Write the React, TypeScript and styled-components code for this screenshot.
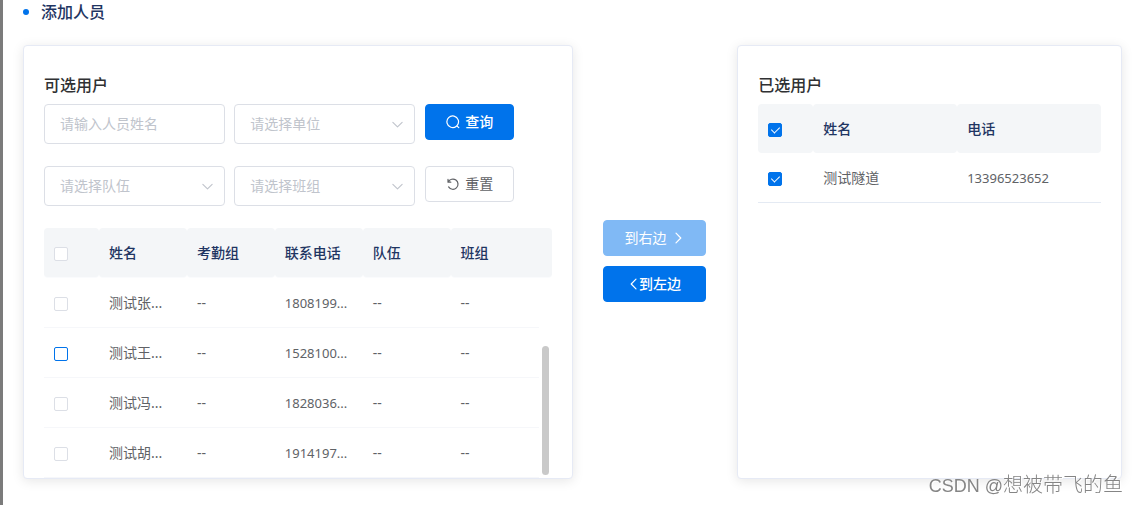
import React from "react";
import styled, { createGlobalStyle } from "styled-components";

const GlobalStyle = createGlobalStyle`
  * { box-sizing: border-box; }
  body {
    margin: 0;
    background: #fff;
    color: #606266;
    font: 14px/20px "Noto Sans", "Noto Sans CJK SC", sans-serif;
  }
  button, input, select { font: inherit; margin: 0; }
`;

const Page = styled.main`
  min-height: 100vh;
  border-left: 3px solid #7b7b7b;
  padding: 0 17px 27px 20px;
`;

const Title = styled.h1`
  display: flex;
  align-items: center;
  gap: 12px;
  margin: 0 0 21px;
  color: #1f3562;
  font-size: 16px;
  font-weight: 500;
  line-height: 24px;

  &::before {
    content: "";
    width: 6px;
    height: 6px;
    border-radius: 50%;
    background: #0073eb;
  }
`;

const Transfer = styled.div`
  display: grid;
  grid-template-columns: 50fr 15fr 35fr;
`;

const Card = styled.section`
  min-width: 0;
  padding: 20px 20px 0;
  border: 1px solid #e6eaf5;
  border-radius: 4px;
  background: #fff;
  box-shadow: 0 2px 12px rgba(0, 0, 0, 0.1);
`;

const CardTitle = styled.h2`
  margin: 0;
  color: #303133;
  font-size: 16px;
  font-weight: 500;
  line-height: 38px;
`;

const Filters = styled.form`
  display: grid;
  grid-template-columns: 181fr 181fr 127fr;
  column-gap: 9px;
  row-gap: 22px;
  margin-bottom: 22px;
`;

const Field = styled.label`
  position: relative;
  display: block;

  svg {
    position: absolute;
    top: 14px;
    right: 11px;
    color: #c0c4cc;
    pointer-events: none;
  }
`;

const controlStyle = `
  display: block;
  width: 100%;
  height: 40px;
  padding: 0 15px;
  border: 1px solid #dcdfe6;
  border-radius: 4px;
  background: #fff;
  color: #c0c4cc;
  appearance: none;
  outline: none;
`;

const TextInput = styled.input`
  ${controlStyle}
  padding-bottom: 2px;
  &::placeholder { color: #c0c4cc; opacity: 1; }
`;

const Select = styled.select`
  ${controlStyle}
`;

const Button = styled.button<{ $primary?: boolean; $gap?: number; $width: number }>`
  display: flex;
  align-items: center;
  justify-content: center;
  gap: ${(p) => p.$gap ?? 5}px;
  width: ${(p) => p.$width}px;
  height: 36px;
  padding: 0;
  border: 1px solid ${(p) => (p.$primary ? "#0073eb" : "#dcdfe6")};
  border-radius: 4px;
  background: ${(p) => (p.$primary ? "#0073eb" : "#fff")};
  color: ${(p) => (p.$primary ? "#fff" : "#606266")};
  font-weight: ${(p) => (p.$primary ? 500 : 400)};
  cursor: pointer;

  &:disabled {
    border-color: #80b9f5;
    background: #80b9f5;
    font-weight: 400;
    cursor: not-allowed;
  }
`;

const FilterAction = styled.div`
  padding-left: 1px;
`;

const Actions = styled.div`
  display: flex;
  flex-direction: column;
  align-items: center;
  justify-content: center;
  gap: 10px;
  padding-bottom: 2px;
`;

const TableBox = styled.div`
  position: relative;
`;

const Table = styled.table`
  width: 100%;
  table-layout: fixed;
  border-collapse: separate;
  border-spacing: 0;
`;

const HeadCell = styled.th<{ $compact?: boolean }>`
  height: ${(p) => (p.$compact ? 49 : 50)}px;
  padding: 0 10px;
  border-bottom: ${(p) => (p.$compact ? "none" : "1px solid #fafbfd")};
  border-radius: 4px;
  background: #f4f6f8;
  color: #1f3562;
  font-weight: 500;
  text-align: left;
`;

const Cell = styled.td<{ $line?: string }>`
  height: 50px;
  padding: 0 10px;
  border-bottom: 1px solid ${(p) => p.$line ?? "#f6f7fa"};
  white-space: nowrap;
`;

const NumberCell = styled(Cell)`
  font-size: 13px;
`;

const Checkbox = styled.input<{ $focus?: boolean }>`
  position: relative;
  display: block;
  width: 14px;
  height: 14px;
  margin-top: 2px;
  border: 1px solid ${(p) => (p.$focus ? "#0073eb" : "#dcdfe6")};
  border-radius: 2px;
  background: #fff;
  appearance: none;

  &:checked {
    border-color: #0073eb;
    background: #0073eb;
  }

  &:checked::after {
    content: "";
    position: absolute;
    top: 1px;
    left: 4px;
    width: 4px;
    height: 7px;
    border: solid #fff;
    border-width: 0 1px 1px 0;
    transform: rotate(45deg);
  }
`;

const ScrollThumb = styled.div`
  position: absolute;
  right: 3px;
  bottom: 3px;
  width: 7px;
  height: 129px;
  border-radius: 4px;
  background: #c9c9c9;
`;

const Watermark = styled.div`
  position: fixed;
  right: 16px;
  bottom: 5px;
  color: #858585;
  font: 300 20px/28px "Noto Sans CJK SC", sans-serif;
  text-shadow: 1px 1px 0 #fff;
  pointer-events: none;

  span {
    font-family: "Liberation Sans", sans-serif;
    font-size: 18px;
  }
`;

const Icon = ({ d, size = 14, width = size }: { d: string; size?: number; width?: number }) => (
  <svg
    width={width}
    height={size}
    viewBox={`${(14 - (14 * width) / size) / 2} 0 ${(14 * width) / size} 14`}
    fill="none"
    stroke="currentColor"
    strokeWidth="1.2"
    strokeLinecap="round"
    strokeLinejoin="round"
    aria-hidden="true"
  >
    <path d={d} />
  </svg>
);

const icons = {
  down: "M2 4.6 7 9.6 12 4.6",
  right: "M5 2.2 9.8 7 5 11.8",
  left: "M9 2.2 4.2 7 9 11.8",
  search: "M10.4 11.2A5.8 5.8 0 1 1 11.2 10.4M10.4 11.2 11.2 10.4M11 11 12.8 12.6",
  reset: "M2 2.4V5.2H4.8M2.3 5A5.1 5.1 0 1 1 2.6 9.9",
};

const SelectField = ({ label }: { label: string }) => (
  <Field>
    <Select aria-label={label}>
      <option>{label}</option>
    </Select>
    <Icon d={icons.down} size={13} />
  </Field>
);

const available = [
  { name: "测试张...", phone: "1808199..." },
  { name: "测试王...", phone: "1528100...", focus: true },
  { name: "测试冯...", phone: "1828036..." },
  { name: "测试胡...", phone: "1914197..." },
];

export default function App() {
  return (
    <Page>
      <GlobalStyle />
      <Title>添加人员</Title>
      <Transfer>
        <Card>
          <CardTitle>可选用户</CardTitle>
          <Filters onSubmit={(e) => e.preventDefault()}>
            <Field>
              <TextInput aria-label="人员姓名" placeholder="请输入人员姓名" />
            </Field>
            <SelectField label="请选择单位" />
            <FilterAction>
              <Button $primary $width={89} type="submit">
                <Icon d={icons.search} />
                查询
              </Button>
            </FilterAction>
            <SelectField label="请选择队伍" />
            <SelectField label="请选择班组" />
            <FilterAction>
              <Button $width={89} type="reset">
                <Icon d={icons.reset} />
                重置
              </Button>
            </FilterAction>
          </Filters>
          <TableBox>
            <Table>
              <colgroup>
                <col width="55" />
                <col span={5} />
                <col width="13" />
              </colgroup>
              <thead>
                <tr>
                  <HeadCell>
                    <Checkbox type="checkbox" aria-label="全选" />
                  </HeadCell>
                  <HeadCell>姓名</HeadCell>
                  <HeadCell>考勤组</HeadCell>
                  <HeadCell>联系电话</HeadCell>
                  <HeadCell>队伍</HeadCell>
                  <HeadCell colSpan={2}>班组</HeadCell>
                </tr>
              </thead>
              <tbody>
                {available.map((u) => (
                  <tr key={u.name}>
                    <Cell>
                      <Checkbox type="checkbox" aria-label={u.name} $focus={u.focus} />
                    </Cell>
                    <Cell>{u.name}</Cell>
                    <Cell>--</Cell>
                    <NumberCell>{u.phone}</NumberCell>
                    <Cell>--</Cell>
                    <Cell>--</Cell>
                  </tr>
                ))}
              </tbody>
            </Table>
            <ScrollThumb />
          </TableBox>
        </Card>
        <Actions>
          <Button $primary $width={103} type="button" disabled>
            到右边
            <Icon d={icons.right} />
          </Button>
          <Button $primary $gap={0} $width={103} type="button">
            <Icon d={icons.left} width={10} />
            到左边
          </Button>
        </Actions>
        <Card>
          <CardTitle>已选用户</CardTitle>
          <Table>
            <colgroup>
              <col width="55" />
              <col span={2} />
            </colgroup>
            <thead>
              <tr>
                <HeadCell $compact>
                  <Checkbox type="checkbox" aria-label="全选已选用户" defaultChecked />
                </HeadCell>
                <HeadCell $compact>姓名</HeadCell>
                <HeadCell $compact>电话</HeadCell>
              </tr>
            </thead>
            <tbody>
              <tr>
                <Cell $line="#e4eaf3">
                  <Checkbox type="checkbox" aria-label="测试隧道" defaultChecked />
                </Cell>
                <Cell $line="#e4eaf3">测试隧道</Cell>
                <NumberCell $line="#e4eaf3">13396523652</NumberCell>
              </tr>
            </tbody>
          </Table>
        </Card>
      </Transfer>
      <Watermark>
        <span>CSDN @</span>想被带飞的鱼
      </Watermark>
    </Page>
  );
}
